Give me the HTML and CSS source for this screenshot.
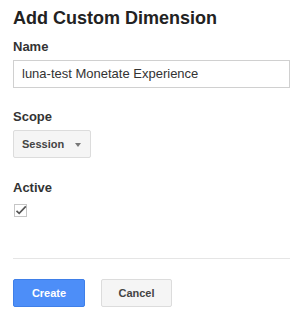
FILE: index.html
```html
<!DOCTYPE html>
<html>
<head>
<meta charset="utf-8">
<link rel="stylesheet" href="styles.css">
</head>
<body>
<div class="dialog">
  <h1 class="title">Add Custom Dimension</h1>
  <div class="field">
    <label class="label">Name</label>
    <div class="input">luna-test Monetate Experience</div>
  </div>
  <div class="field field-scope">
    <label class="label">Scope</label>
    <div class="select"><span>Session</span><span class="arrow"></span></div>
  </div>
  <div class="field field-active">
    <label class="label">Active</label>
    <div class="checkbox">
      <svg width="13" height="13" viewBox="0 0 13 13"><path d="M2.5 6.8 L5.2 9.4 L11.8 2.4" fill="none" stroke="#555" stroke-width="1.6"/></svg>
    </div>
  </div>
  <div class="divider"></div>
  <div class="actions">
    <div class="btn btn-primary">Create</div>
    <div class="btn btn-default">Cancel</div>
  </div>
</div>
</body>
</html>
```
FILE: styles.css
```css
html, body {
  margin: 0;
  padding: 0;
  background: #fff;
}
body {
  font-family: "Liberation Sans", Arial, sans-serif;
  color: #222;
}
.dialog {
  padding: 0 13px;
  display: flex;
  flex-direction: column;
}
.title {
  margin: 6px 0 0;
  font-size: 18px;
  line-height: 24px;
  font-weight: bold;
  color: #222;
}
.field {
  display: flex;
  flex-direction: column;
  align-items: flex-start;
}
.label {
  font-size: 13px;
  line-height: 16px;
  font-weight: bold;
  color: #333;
}
.field:first-of-type {
  margin-top: 9px;
}
.input {
  margin-top: 5px;
  box-sizing: border-box;
  width: 100%;
  height: 28px;
  border: 1px solid #d0d0d0;
  padding: 0 8px;
  font-size: 13px;
  line-height: 26px;
  color: #333;
}
.field-scope {
  margin-top: 21px;
}
.select {
  margin-top: 5px;
  box-sizing: border-box;
  width: 78px;
  height: 28px;
  border: 1px solid #dcdcdc;
  border-radius: 2px;
  background: #f5f5f5;
  padding: 0 9px 0 8px;
  display: flex;
  align-items: center;
  justify-content: space-between;
  font-size: 11px;
  font-weight: bold;
  color: #444;
}
.arrow {
  width: 0;
  height: 0;
  border-left: 3px solid transparent;
  border-right: 3px solid transparent;
  border-top: 4px solid #777;
  margin-top: 1px;
}
.field-active {
  margin-top: 22px;
}
.checkbox {
  margin-top: 8px;
  margin-left: 1px;
  box-sizing: border-box;
  width: 13px;
  height: 13px;
  border: 1px solid #c6c6c6;
  position: relative;
}
.checkbox svg {
  display: block;
  position: absolute;
  left: -1px;
  top: -1px;
}
.divider {
  margin-top: 41px;
  height: 1px;
  background: #e5e5e5;
}
.actions {
  margin-top: 20px;
  display: flex;
  gap: 16px;
}
.btn {
  box-sizing: border-box;
  width: 72px;
  height: 28px;
  border-radius: 2px;
  font-size: 11px;
  font-weight: bold;
  display: flex;
  align-items: center;
  justify-content: center;
}
.btn-primary {
  background: #4d8ef8;
  border: 1px solid #3f7fe8;
  color: #fff;
}
.btn-default {
  width: 71px;
  background: #f5f5f5;
  border: 1px solid #dcdcdc;
  color: #444;
}
```
